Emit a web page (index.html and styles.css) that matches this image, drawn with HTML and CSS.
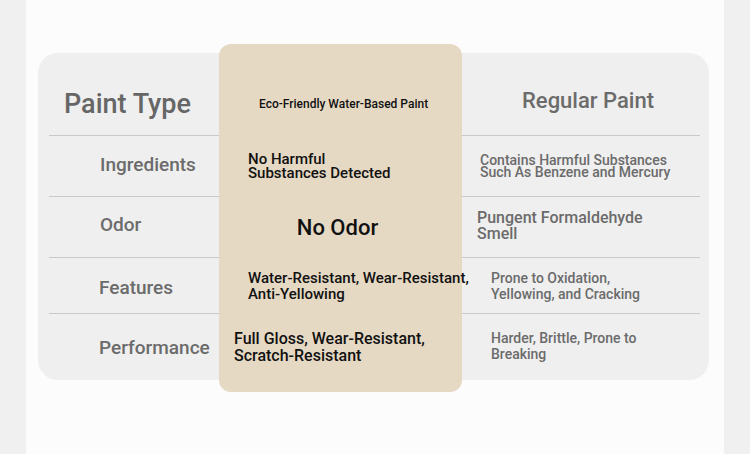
FILE: index.html
```html
<!DOCTYPE html>
<html lang="en">
<head>
<meta charset="utf-8">
<title>Paint Comparison</title>
<link rel="stylesheet" href="styles.css">
</head>
<body>
<div class="page">
  <div class="card">
    <div class="col col-left">
      <div class="cell head head-low"><span class="title">Paint Type</span></div>
      <div class="cell r1 label up2">Ingredients</div>
      <div class="cell r2 label up3">Odor</div>
      <div class="cell r3 label lab-b down2">Features</div>
      <div class="cell r4 label lab-b">Performance</div>
    </div>
    <div class="col col-mid">
      <div class="cell head head-low mid-head">Eco-Friendly Water-Based Paint</div>
      <div class="cell r1 mid-tight pl29">No Harmful<br>Substances Detected</div>
      <div class="cell r2 mid-big">No Odor</div>
      <div class="cell r3 mid-text pl29">Water-Resistant, Wear-Resistant,<br>Anti-Yellowing</div>
      <div class="cell r4 mid-text mid-lg pl15">Full Gloss, Wear-Resistant,<br>Scratch-Resistant</div>
    </div>
    <div class="col col-right">
      <div class="cell head right-head">Regular Paint</div>
      <div class="cell r1 rt-tight">Contains Harmful Substances<br>Such As Benzene and Mercury</div>
      <div class="cell r2 rt-lg up2">Pungent Formaldehyde<br>Smell</div>
      <div class="cell r3 rt-text">Prone to Oxidation,<br>Yellowing, and Cracking</div>
      <div class="cell r4 rt-text up2">Harder, Brittle, Prone to<br>Breaking</div>
    </div>
  </div>
</div>
</body>
</html>
```

FILE: styles.css
```css
* { box-sizing: border-box; }
html, body { margin: 0; padding: 0; }
body {
  background: #f0f0f0;
  font-family: Roboto, "Liberation Sans", sans-serif;
  font-weight: 500;
}
.page {
  width: 698px;
  min-height: 454px;
  margin: 0 auto;
  background: #fdfcfc;
  padding: 53px 15px 0 12px;
}
.card {
  display: flex;
  background: #efefef;
  border-radius: 20px;
  padding: 0 9px 0 11px;
  height: 327px;
}
.col { display: flex; flex-direction: column; }
.col-left { width: 170px; }
.col-mid {
  width: 243px;
  background: #e6d9c4;
  border-radius: 12px;
  margin: -9px 0 -12px;
  padding: 9px 0 12px;
  position: relative;
  z-index: 1;
  color: #111;
}
.col-right { width: 238px; color: #6b6b6b; }
.cell {
  display: flex;
  align-items: center;
  border-bottom: 1px solid #c9c9c9;
  white-space: nowrap;
}
.col-mid .cell { border-bottom-color: transparent; }
.head { height: 83px; padding-top: 16px; }
.head-low { padding-top: 20px; }
.r1 { height: 61px; }
.r2 { height: 61px; }
.r3 { height: 56px; }
.r4 { height: 66px; border-bottom: none; }
.up2 { padding-bottom: 3px; }
.up3 { padding-bottom: 5px; }
.down2 { padding-top: 3px; }

.title {
  font-size: 27px;
  color: #666;
  padding-left: 15px;
}
.label {
  font-size: 19px;
  color: #6b6b6b;
  padding-left: 51px;
}
.lab-b { padding-left: 50px; }

.mid-head {
  font-size: 12px;
  padding-left: 40px;
}
.mid-tight { font-size: 15px; line-height: 14px; }
.mid-big { font-size: 22px; justify-content: center; padding-right: 6px; }
.mid-text { font-size: 15px; line-height: 16px; }
.mid-lg { font-size: 16px; line-height: 17.5px; }
.pl29 { padding-left: 29px; }
.pl15 { padding-left: 15px; }

.right-head { font-size: 22px; padding-left: 60px; padding-bottom: 3px; }
.rt-tight { font-size: 14px; line-height: 12.5px; padding-left: 18px; }
.rt-lg { font-size: 16px; line-height: 15.5px; padding-left: 15px; }
.rt-text { font-size: 14px; line-height: 16px; padding-left: 29px; }
```
